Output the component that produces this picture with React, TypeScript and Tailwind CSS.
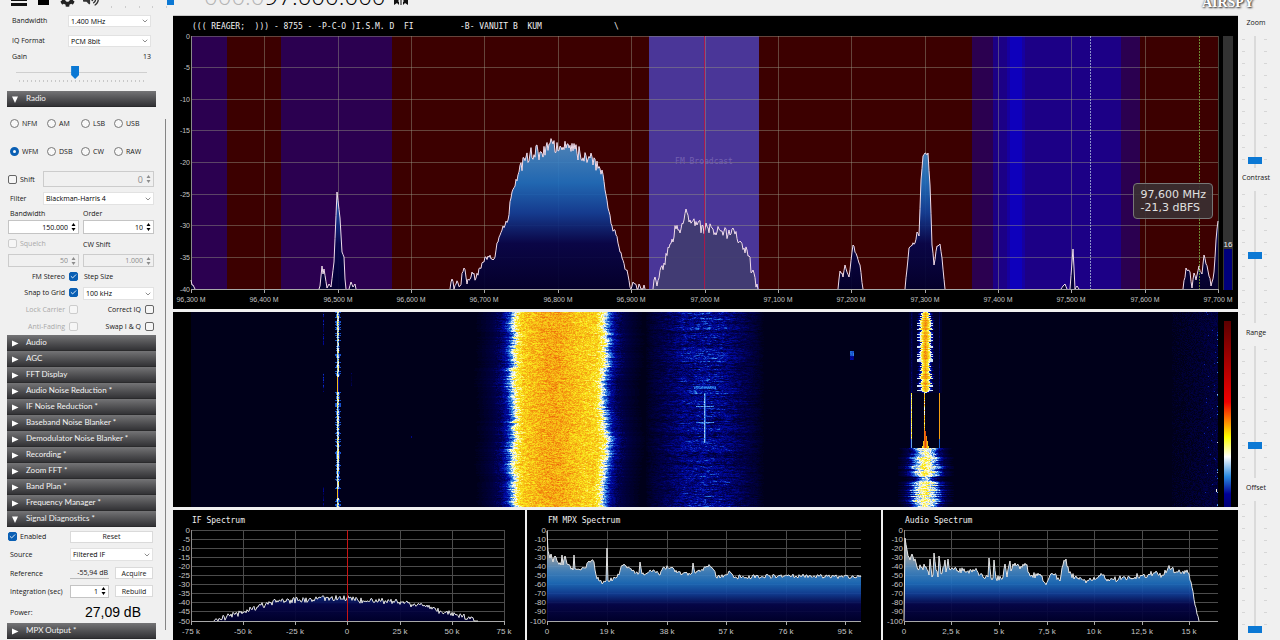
import { useId, useMemo } from "react"
import type { ReactNode } from "react"
import { Check, ChevronDown } from "lucide-react"
import { FaCog, FaVolumeUp } from "react-icons/fa"

type Point = [number, number]

// small seeded generator so the traces look the same on every render
function createRandom(seed: number) {
  let s = seed
  return () => {
    s = (s * 1664525 + 1013904223) % 4294967296
    return s / 4294967296
  }
}

function roughen(points: Point[], amp: number, seed: number, floor: number, top = 0): Point[] {
  const rnd = createRandom(seed)
  const out: Point[] = []
  for (let i = 0; i < points.length - 1; i++) {
    const [x0, y0] = points[i]
    const [x1, y1] = points[i + 1]
    out.push([x0, y0])
    for (let x = x0 + 1; x < x1; x++) {
      const y = y0 + ((y1 - y0) * (x - x0)) / (x1 - x0) + (rnd() - 0.5) * 2 * amp
      out.push([x, Math.max(top, Math.min(floor, Math.round(y * 10) / 10))])
    }
  }
  out.push(points[points.length - 1])
  return out
}

const toLine = (pts: Point[]) => "M" + pts.map((p) => p.join(" ")).join("L")

/* ---------- spectrum data ---------- */

const MAIN_SEGMENTS: { amp: number; selected?: boolean; points: Point[] }[] = [
  { amp: 0, points: [[191, 280], [192, 285], [193, 285], [195, 289]] },
  { amp: 0, points: [[319, 289], [320, 286], [322, 266], [323, 274], [324, 269], [327, 288], [329, 284], [331, 287], [334, 262], [337, 192], [340, 218], [342, 252], [344, 257], [345, 279], [346, 289]] },
  { amp: 0, points: [[349, 289], [351, 282], [353, 287], [355, 284], [356, 289]] },
  { amp: 4, points: [[450, 289], [452, 279], [454, 289], [458, 283], [460, 286], [464, 268], [467, 284], [472, 272], [476, 278], [480, 268], [484, 262], [488, 256], [494, 259], [498, 242], [503, 226], [508, 220], [511, 198], [515, 186], [519, 172]] },
  { amp: 8, points: [[519, 172], [524, 158], [530, 154], [540, 152], [553, 144], [558, 151], [562, 150], [569, 148], [580, 153], [590, 158], [602, 170]] },
  { amp: 4, points: [[602, 170], [606, 195], [608, 208], [612, 226], [616, 235], [622, 258], [627, 270], [631, 289], [633, 282], [637, 289], [640, 286], [642, 289], [644, 285], [645, 289]] },
  { amp: 6, selected: true, points: [[653, 289], [655, 277], [657, 286], [664, 263], [670, 244], [676, 229], [680, 233], [684, 220], [686, 209], [690, 220], [697, 225], [705, 229], [712, 228], [722, 231], [730, 235], [733, 228], [741, 242], [747, 250], [752, 272], [757, 284], [758, 289]] },
  { amp: 2, points: [[838, 289], [840, 271], [843, 277], [845, 265], [849, 277], [853, 245], [857, 256], [860, 265], [863, 289]] },
  { amp: 2, points: [[905, 289], [909, 248], [915, 243], [917, 232], [919, 236], [921, 180], [923, 156], [925, 153], [928, 153], [930, 185], [932, 245], [934, 265], [937, 246], [940, 244], [942, 258], [945, 289]] },
  { amp: 0, points: [[1061, 289], [1063, 286], [1065, 284], [1067, 289]] },
  { amp: 0, points: [[1070, 289], [1072, 262], [1073, 249], [1074, 268], [1075, 289], [1077, 286], [1079, 289]] },
  { amp: 3, points: [[1183, 289], [1186, 268], [1190, 272], [1192, 288], [1194, 273], [1196, 280], [1199, 266], [1202, 274], [1204, 255], [1208, 271], [1211, 286], [1214, 272], [1216, 240], [1218, 221]] },
]

const IF_POINTS: Point[] = [[214, 621], [220, 619], [230, 616], [243, 612], [257, 607], [270, 603], [285, 601], [300, 600], [315, 599], [330, 598], [347, 598], [365, 601], [380, 601], [395, 601], [410, 604], [425, 606], [440, 611], [455, 614], [470, 619], [478, 621]]

const MPX_POINTS: Point[] = [[547, 531], [548, 551], [550, 558], [551, 554], [553, 562], [555, 556], [557, 561], [561, 565], [562, 555], [563, 565], [565, 556], [567, 564], [573, 570], [574, 555], [575, 569], [584, 568], [591, 561], [594, 562], [596, 575], [599, 581], [603, 583], [606, 581], [607, 548], [608, 581], [615, 578], [619, 575], [621, 567], [624, 564], [632, 571], [639, 573], [640, 562], [642, 574], [653, 570], [660, 575], [664, 567], [670, 568], [682, 574], [692, 573], [693, 563], [695, 573], [710, 566], [714, 570], [716, 577], [725, 575], [729, 571], [735, 577], [800, 576], [861, 577]]

const AUDIO_POINTS: Point[] = [[904, 621], [905, 538], [907, 550], [910, 560], [912, 554], [917, 567], [925, 567], [929, 575], [930, 559], [932, 577], [933, 575], [934, 553], [936, 570], [938, 577], [939, 556], [941, 574], [945, 560], [946, 572], [948, 559], [950, 570], [956, 568], [965, 572], [975, 570], [983, 577], [988, 577], [989, 558], [991, 578], [993, 578], [994, 560], [996, 578], [1003, 577], [1005, 564], [1007, 577], [1010, 561], [1011, 571], [1015, 563], [1020, 569], [1026, 565], [1031, 576], [1040, 574], [1045, 583], [1053, 574], [1060, 581], [1063, 565], [1066, 559], [1069, 573], [1075, 577], [1088, 581], [1100, 576], [1110, 580], [1125, 577], [1142, 576], [1155, 573], [1162, 575], [1168, 568], [1180, 572], [1188, 573], [1191, 582], [1195, 605], [1197, 614], [1199, 621]]

/* ---------- charts ---------- */

interface ChartProps {
  view: string
  label: string
  left: number
  right: number
  top: number
  bottom: number
  xTicks: { x: number; text: string }[]
  yStep: number
  yCount: number
  gridColor: string
  labelSize: string
  background?: ReactNode
  children: ReactNode
}

function Chart({ view, label, left, right, top, bottom, xTicks, yStep, yCount, gridColor, labelSize, background, children }: ChartProps) {
  const rows = Array.from({ length: yCount + 1 }, (_, i) => i)
  return (
    <svg viewBox={view} role="img" aria-label={label} className="block w-full bg-black font-['Liberation_Sans',sans-serif]">
      {background}
      {rows.map((i) => {
        const y = Math.floor(top + ((bottom - top) * i) / yCount)
        return (
          <g key={i}>
            <line x1={left} x2={right} y1={y + 0.5} y2={y + 0.5} stroke={i === yCount ? "#a8a8a8" : gridColor} />
            <text x={left - 1} y={y + 3} textAnchor="end" fill="#c4c4c4" className={labelSize}>
              {i === 0 ? "0" : -i * yStep}
            </text>
          </g>
        )
      })}
      {xTicks.map((t, i) => (
        <g key={t.text}>
          <line x1={t.x + 0.5} x2={t.x + 0.5} y1={top} y2={bottom} stroke={i === 0 ? "#8a8a8a" : gridColor} />
          <line x1={t.x + 0.5} x2={t.x + 0.5} y1={bottom} y2={bottom + 4} stroke="#a8a8a8" />
          <text x={t.x} y={bottom + 13} textAnchor="middle" fill="#c4c4c4" className={labelSize}>
            {t.text}
          </text>
        </g>
      ))}
      {children}
    </svg>
  )
}

function LevelGradient({ id, top, bottom }: { id: string; top: number; bottom: number }) {
  return (
    <linearGradient id={id} gradientUnits="userSpaceOnUse" x1="0" x2="0" y1={top} y2={bottom}>
      <stop offset="0" stopColor="#d0d0d0" />
      <stop offset="0.3" stopColor="#98a6b2" />
      <stop offset="0.45" stopColor="#4788c4" />
      <stop offset="0.58" stopColor="#1f70c0" />
      <stop offset="0.7" stopColor="#12409a" />
      <stop offset="0.82" stopColor="#06064c" />
      <stop offset="1" stopColor="#00002e" />
    </linearGradient>
  )
}

function ChartTitle({ x, y, children }: { x: number; y: number; children: ReactNode }) {
  return (
    <text x={x} y={y} fill="#f0f0f0" xmlSpace="preserve" className="font-['DejaVu_Sans_Mono',monospace] text-[8px]">
      {children}
    </text>
  )
}

const MAIN_TICKS = Array.from({ length: 15 }, (_, i) => {
  const khz = 96300 + i * 100
  return { x: Math.round(191 + i * 73.36), text: `${Math.floor(khz / 1000)},${String(khz % 1000).padStart(3, "0")} M` }
})

function MainSpectrum() {
  const id = useId()
  const segments = useMemo(
    () => MAIN_SEGMENTS.map((s, i) => ({ ...s, path: toLine(roughen(s.points, s.amp, 40 + i, 289)) })),
    []
  )
  return (
    <Chart
      view="173 16 1065 293"
      label="RF spectrum"
      left={191}
      right={1218}
      top={36}
      bottom={289}
      xTicks={MAIN_TICKS}
      yStep={5}
      yCount={8}
      gridColor="rgba(150,150,130,0.45)"
      labelSize="text-[7px]"
      background={
        <g>
          <rect x="191" y="36" width="1027" height="253" fill="#3c0000" />
          <rect x="191" y="36" width="36" height="253" fill="#2b0050" />
          <rect x="281" y="36" width="111" height="253" fill="#2b0050" />
          <rect x="649" y="36" width="110" height="253" fill="#4a3698" />
          <rect x="972" y="36" width="168" height="253" fill="#2b0050" />
          <rect x="993" y="36" width="128" height="253" fill="#1c0086" />
          <rect x="1007" y="36" width="18" height="253" fill="#1600a0" />
          <rect x="1010" y="36" width="12" height="253" fill="#0e00bc" />
        </g>
      }
    >
      <defs>
        <LevelGradient id={id} top={36} bottom={289} />
      </defs>
      <ChartTitle x={192} y={29}>{"((( REAGER;  ))) - 8755 - -P-C-O )I.S.M. D  FI"}</ChartTitle>
      <ChartTitle x={460} y={29}>{"-B- VANUIT B  KUM"}</ChartTitle>
      <ChartTitle x={614} y={29}>{"\\"}</ChartTitle>
      {segments.map((s, i) => (
        <g key={i}>
          <path
            d={`${s.path}L${s.points[s.points.length - 1][0]} 289L${s.points[0][0]} 289Z`}
            fill={s.selected ? "#403c70" : `url(#${id})`}
            fillOpacity={0.92}
          />
          <path d={s.path} fill="none" stroke="#f0dcea" strokeWidth="1" />
        </g>
      ))}
      <text x="704" y="164" textAnchor="middle" fill="#7360b0" className="font-['DejaVu_Sans_Mono',monospace] text-[8px]">
        FM Broadcast
      </text>
      <line x1="704.5" x2="704.5" y1="36" y2="289" stroke="#b81444" strokeOpacity="0.85" />
      <line x1="1090.5" x2="1090.5" y1="36" y2="289" stroke="#a8b8d8" strokeDasharray="2 1" strokeOpacity="0.8" />
      <line x1="1199.5" x2="1199.5" y1="36" y2="289" stroke="#6c8c34" strokeDasharray="2 1" />
      <rect x="1223" y="36" width="10" height="254" fill="#333333" />
      <rect x="1224" y="249" width="8" height="41" fill="#00007c" />
      <text x="1228" y="247" textAnchor="middle" fill="#eeeeee" className="text-[8px]">
        16
      </text>
    </Chart>
  )
}

/* ---------- waterfall ---------- */

const PALETTE: [number, number, number, number][] = [
  [0, 0, 0, 26],
  [0.15, 0, 0, 80],
  [0.3, 0, 10, 165],
  [0.42, 40, 125, 225],
  [0.52, 250, 252, 250],
  [0.62, 250, 235, 30],
  [0.78, 242, 140, 15],
  [0.9, 225, 30, 10],
  [1, 110, 0, 0],
]
const LEVELS = 40

function paletteColor(v: number) {
  for (let i = 1; i < PALETTE.length; i++) {
    const [b, ...hi] = PALETTE[i]
    if (v <= b) {
      const [a, ...lo] = PALETTE[i - 1]
      const t = (v - a) / (b - a)
      return `rgb(${lo.map((c, k) => Math.round(c + (hi[k] - c) * t)).join(",")})`
    }
  }
  return "rgb(110,0,0)"
}

function lerpStops(v: number, stops: Point[]) {
  if (v <= stops[0][0]) return stops[0][1]
  for (let i = 1; i < stops.length; i++) {
    if (v <= stops[i][0]) {
      const [a, x] = stops[i - 1]
      const [b, y] = stops[i]
      return x + ((y - x) * (v - a)) / (b - a)
    }
  }
  return stops[stops.length - 1][1]
}

// level against distance inside the edge of a strong station
const WIDE_EDGE: Point[] = [[-38, 0], [-24, 0.08], [-14, 0.16], [-7, 0.3], [-3, 0.42], [0, 0.51], [4, 0.6], [10, 0.66]]

function buildWaterfall() {
  const rnd = createRandom(977)
  const paths: string[][] = Array.from({ length: LEVELS + 1 }, () => [])
  const x0 = 191
  const x1 = 1218
  let drift = 0
  let fmRow = 0
  for (let row = 0; row < 195; row++) {
    const line = new Float32Array(x1 - x0)
    const put = (x: number, v: number) => {
      if (x >= x0 && x < x1) line[x - x0] = Math.max(line[x - x0], v)
    }
    drift = drift * 0.85 + (rnd() - 0.5) * 1.8
    fmRow = fmRow * 0.6 + (rnd() - 0.5) * 0.09

    const le = 513 + drift + Math.sin(row / 13) * 1.5 + (rnd() - 0.5) * 4
    const re = 604 + drift + Math.sin(row / 17) * 2 + (rnd() - 0.5) * 4
    let n = 0
    for (let x = 470; x < 645; x++) {
      n = n * 0.35 + (rnd() - 0.5) * 0.13
      const d = Math.min(x - le, re - x)
      const core = 0.075 * Math.exp(-(((x - 553) / 24) ** 2))
      put(x, lerpStops(d, WIDE_EDGE) + (d > 3 ? core + n : d > -18 ? n * 0.8 : 0))
    }

    // weak FM station with horizontal streaks
    n = 0
    for (let x = 646; x < 764; x++) {
      n = n * 0.6 + (rnd() - 0.5) * 0.2
      const dist = Math.abs(x - 704)
      const shape = lerpStops(dist, [[0, 1], [22, 0.85], [40, 0.5], [52, 0.25], [60, 0]])
      put(x, shape * (0.25 + fmRow) + n * (0.1 + shape * 0.75))
    }
    if (row > 73 && row < 77) for (let x = 694; x < 716; x++) put(x, 0.34 + rnd() * 0.1)
    if (row > 80 && row < 131) {
      put(704, 0.43 + rnd() * 0.06)
      put(705, 0.38)
    }
    if (row === 94 || row === 110) for (let x = 696; x < 714; x++) put(x, 0.4 + rnd() * 0.06)

    // narrow carrier
    const c = rnd()
    const quiet = (row > 64 && row < 80) || (row > 176 && row < 186)
    put(337, quiet ? 0.7 : 0.47 + c * 0.12)
    put(338, quiet ? 0.28 : 0.4 + rnd() * 0.2)
    if (!quiet && c > 0.4) {
      put(336, 0.4)
      put(339, 0.34)
    }
    if (!quiet && c > 0.8) {
      put(335, 0.38)
      put(340, 0.38)
    }
    if (row < 34 || (row > 60 && row < 80) || row > 174) put(323, rnd() * 0.36)
    if (row > 60 && row < 74) put(351, rnd() * 0.2)

    // 97,300 MHz station, three phases
    if (row < 81) {
      const w = 5 + (rnd() - 0.5) * 3 - (row < 8 ? 1 : 0) - (row > 76 ? row - 76 : 0)
      for (let x = 909; x < 942; x++) {
        const d = w - Math.abs(x - 925)
        put(x, d > 0 ? lerpStops(d, [[0, 0.5], [2, 0.62], [5, 0.77]]) + (rnd() - 0.5) * 0.08 : d > -3 ? 0.36 + d * 0.08 : 0.04)
      }
      if (rnd() > 0.78) for (let x = 917; x < 933; x++) put(x, 0.5)
      put(911, 0.1 + rnd() * 0.1)
      put(912, 0.1)
      put(939, 0.12 + rnd() * 0.08)
    } else if (row < 136) {
      const cone = row > 118 ? (row - 118) / 5 : 0
      for (let x = 920; x < 930; x++) if (Math.abs(x - 925) < cone) put(x, 0.86 - Math.abs(x - 925) * 0.08)
      put(924, cone ? 0.8 : 0.5 + rnd() * 0.3)
      put(911, row > 126 ? 0.45 : 0.54 + rnd() * 0.14)
      put(910, 0.2)
      put(939, row > 126 ? 0.4 : 0.76)
    } else {
      const w = 14 + (rnd() - 0.5) * 7 - (Math.abs(row - 166) < 3 ? 6 : 0)
      n = 0
      for (let x = 898; x < 954; x++) {
        n = n * 0.4 + (rnd() - 0.5) * 0.12
        const d = w - Math.abs(x - 925)
        put(x, lerpStops(d, [[-14, 0], [-5, 0.14], [0, 0.32], [3, 0.45], [8, 0.52], [14, 0.59]]) + (d > -6 ? n : 0))
      }
    }

    if (row > 38 && row < 48) {
      for (let x = 850; x < 854; x++) put(x, (row < 44 ? 0.44 : 0.3) - rnd() * 0.08)
    }
    if (row === 124 || row === 125) put(411, 0.25)

    for (let x = 1172; x < 1218; x++) put(x, ((x - 1172) / 46) * 0.1 + (rnd() - 0.5) * 0.12)
    if (rnd() > 0.88) put(1217, 0.3 + rnd() * 0.2)
    if (rnd() > 0.85) put(1204 + Math.floor(rnd() * 12), 0.32)
    if (row > 176 && row < 180) put(1216, 0.52)

    let start = 0
    let level = Math.round(line[0] * LEVELS)
    for (let i = 1; i <= line.length; i++) {
      const next = i < line.length ? Math.min(LEVELS, Math.round(line[i] * LEVELS)) : -1
      if (next !== level) {
        if (level > 0) paths[level].push(`M${x0 + start} ${312 + row}.5h${i - start}`)
        start = i
        level = next
      }
    }
  }
  return paths
}

function Waterfall() {
  const id = useId()
  const paths = useMemo(buildWaterfall, [])
  return (
    <svg viewBox="173 312 1065 195" role="img" aria-label="Waterfall" className="block w-full bg-black">
      <defs>
        <linearGradient id={id} x1="0" x2="0" y1="0" y2="1">
          <stop offset="0" stopColor="#5c0000" />
          <stop offset="0.37" stopColor="#f00000" />
          <stop offset="0.45" stopColor="#ff7a00" />
          <stop offset="0.53" stopColor="#ffff00" />
          <stop offset="0.62" stopColor="#ffffff" />
          <stop offset="0.71" stopColor="#2a8ae0" />
          <stop offset="0.79" stopColor="#000096" />
          <stop offset="1" stopColor="#00001c" />
        </linearGradient>
      </defs>
      <rect x="191" y="312" width="1027" height="195" fill="#00001a" />
      <g shapeRendering="crispEdges">
        {paths.map((p, i) => (p.length ? <path key={i} d={p.join("")} stroke={paletteColor(i / LEVELS)} /> : null))}
      </g>
      <rect x="1224" y="321" width="7" height="219" fill={`url(#${id})`} />
    </svg>
  )
}

interface SmallSpectrumProps {
  view: string
  title: string
  left: number
  right: number
  ticks: { x: number; text: string }[]
  yStep: number
  points: Point[]
  amp: number
  centre?: number
}

function SmallSpectrum({ view, title, left, right, ticks, yStep, points, amp, centre }: SmallSpectrumProps) {
  const id = useId()
  const path = useMemo(() => toLine(roughen(points, amp, 7 + left, 621, 530)), [points, amp, left])
  return (
    <Chart
      view={view}
      label={title}
      left={left}
      right={right}
      top={530}
      bottom={621}
      xTicks={ticks}
      yStep={yStep}
      yCount={10}
      gridColor="#4c4c4c"
      labelSize="text-[8px]"
    >
      <defs>
        <LevelGradient id={id} top={530} bottom={621} />
      </defs>
      <ChartTitle x={left + 1} y={523}>{title}</ChartTitle>
      <path d={`${path}L${points[points.length - 1][0]} 621L${points[0][0]} 621Z`} fill={`url(#${id})`} fillOpacity={0.92} />
      <path d={path} fill="none" stroke="#e4e4e4" strokeWidth="1" />
      {centre && <line x1={centre} x2={centre} y1="530" y2="621" stroke="#c81414" />}
    </Chart>
  )
}

const IF_TICKS = [
  { x: 191, text: "-75 k" },
  { x: 243, text: "-50 k" },
  { x: 295, text: "-25 k" },
  { x: 347, text: "0" },
  { x: 400, text: "25 k" },
  { x: 452, text: "50 k" },
  { x: 504, text: "75 k" },
]
const MPX_TICKS = [
  { x: 547, text: "0" },
  { x: 607, text: "19 k" },
  { x: 667, text: "38 k" },
  { x: 726, text: "57 k" },
  { x: 786, text: "76 k" },
  { x: 845, text: "95 k" },
]
const AUDIO_TICKS = [
  { x: 904, text: "0" },
  { x: 951, text: "2,5 k" },
  { x: 999, text: "5 k" },
  { x: 1047, text: "7,5 k" },
  { x: 1094, text: "10 k" },
  { x: 1142, text: "12,5 k" },
  { x: 1189, text: "15 k" },
]

/* ---------- form controls ---------- */

function SelectBox({ label, value, className }: { label: string; value: string; className: string }) {
  return (
    <div className={`relative ${className}`}>
      <select aria-label={label} className="block h-full w-full appearance-none border border-[#e2e2e2] bg-white pl-[2px] text-[7px] leading-none text-black">
        <option>{value}</option>
      </select>
      <ChevronDown className="pointer-events-none absolute top-1/2 right-[2px] size-2 -translate-y-1/2 text-[#555]" />
    </div>
  )
}

function NumberBox({ label, value, disabled, big }: { label: string; value: string; disabled?: boolean; big?: boolean }) {
  return (
    <div className={`flex h-full w-full items-center border pr-[2px] ${disabled ? "border-[#cccccc] text-[#8c8c8c]" : "border-[#c4c4c4] bg-white text-black"}`}>
      <input
        aria-label={label}
        defaultValue={value}
        disabled={disabled}
        className={`w-full min-w-0 bg-transparent pr-[3px] text-right leading-none ${big ? "text-[9px]" : "text-[7px]"}`}
      />
      <svg viewBox="0 0 5 10" className="h-[10px] w-[5px] shrink-0" aria-hidden="true">
        <path d="M2.5 1L4.5 4H.5ZM2.5 9L4.5 6H.5Z" fill="currentColor" />
      </svg>
    </div>
  )
}

interface CheckProps {
  label: string
  checked?: boolean
  disabled?: boolean
  boxLast?: boolean
}

function CheckField({ label, checked, disabled, boxLast }: CheckProps) {
  return (
    <label className={`flex items-center ${boxLast ? "flex-row-reverse gap-1" : "gap-[3px]"} ${disabled ? "text-[#a8a8a8]" : ""}`}>
      <span className="relative block size-[9px]">
        <input
          type="checkbox"
          defaultChecked={checked}
          disabled={disabled}
          className="block size-[9px] appearance-none rounded-[2px] border border-[#666] bg-[#f6f6f6] checked:border-[#0a5fb4] checked:bg-[#0a5fb4] disabled:border-[#cccccc]"
        />
        {checked && <Check strokeWidth={3} className="pointer-events-none absolute inset-px size-[7px] text-white" />}
      </span>
      {label}
    </label>
  )
}

function PanelHeader({ title, open }: { title: string; open?: boolean }) {
  return (
    <button
      type="button"
      aria-expanded={!!open}
      className="flex h-4 w-full items-center border-b border-[#2a2a2c] bg-linear-to-b from-[#747476] to-[#333336] pl-[5px] text-left font-['Lato',sans-serif] text-[8px] leading-[10px] text-[#f4f4f4]"
    >
      <svg viewBox="0 0 7 7" className="mt-[2px] mr-[7px] size-[7px]" aria-hidden="true">
        <path d={open ? "M0 .5H6L3 7Z" : "M0 .5V6.5L6.5 3.5Z"} fill="#fff" />
      </svg>
      <span className="pb-[2px]">{title}</span>
    </button>
  )
}

const MODES = ["NFM", "AM", "LSB", "USB", "WFM", "DSB", "CW", "RAW"]

const CLOSED_PANELS = [
  "Audio",
  "AGC",
  "FFT Display",
  "Audio Noise Reduction *",
  "IF Noise Reduction *",
  "Baseband Noise Blanker *",
  "Demodulator Noise Blanker *",
  "Recording *",
  "Zoom FFT *",
  "Band Plan *",
  "Frequency Manager *",
]

function Sidebar() {
  return (
    <aside className="flex w-[173px] shrink-0 text-[7px] leading-none text-[#151515]">
      <div className="ml-[7px] w-[149px]">
        <div className="flex flex-col gap-2 pr-[5px] pl-[5px]">
          <div className="flex h-3 items-center justify-between">
            <span className="pb-px">Bandwidth</span>
            <SelectBox label="Bandwidth" value="1.400 MHz" className="h-3 w-[83px]" />
          </div>
          <div className="flex h-3 items-center justify-between">
            <span className="pb-px">IQ Format</span>
            <SelectBox label="IQ Format" value="PCM 8bit" className="h-3 w-[83px]" />
          </div>
        </div>
        <div className="mt-[3px] px-[5px]">
          <label htmlFor="gain" className="flex h-3 items-center justify-between">
            Gain <span>13</span>
          </label>
          <input
            id="gain"
            type="range"
            min="0"
            max="29"
            defaultValue="13"
            className="mt-1 ml-1 block h-[13px] w-[131px] appearance-none bg-transparent [&::-webkit-slider-runnable-track]:h-px [&::-webkit-slider-runnable-track]:bg-[#cfcfcf] [&::-webkit-slider-thumb]:-mt-[6px] [&::-webkit-slider-thumb]:h-[13px] [&::-webkit-slider-thumb]:w-2 [&::-webkit-slider-thumb]:appearance-none [&::-webkit-slider-thumb]:bg-[#0b78d4] [&::-webkit-slider-thumb]:[clip-path:polygon(0_0,100%_0,100%_70%,50%_100%,0_70%)]"
          />
          <div className="mt-px ml-[7px] h-[2px] w-[126px] bg-[repeating-linear-gradient(to_right,#c8c8c8_0_1px,transparent_1px_4px)]" />
        </div>

        <div className="mt-[9px]">
          <PanelHeader title="Radio" open />
        </div>
        <fieldset className="mt-[10px] grid grid-cols-[37px_34px_33px_auto] gap-y-4 pl-[3px]">
          {MODES.map((m) => (
            <label key={m} className="flex h-3 items-center gap-[3px]">
              <input
                type="radio"
                name="mode"
                defaultChecked={m === "WFM"}
                className="block size-[9px] appearance-none rounded-full border border-[#777] bg-[#f8f8f8] checked:border-[3px] checked:border-[#0a5fb4]"
              />
              {m}
            </label>
          ))}
        </fieldset>

        <div className="mt-[14px] flex h-4 items-center justify-between pr-[2px] pl-px">
          <CheckField label="Shift" />
          <div className="h-4 w-[111px]">
            <NumberBox label="Shift" value="0" disabled big />
          </div>
        </div>
        <div className="mt-[5px] flex h-[13px] items-center justify-between pr-[2px] pl-[3px]">
          Filter
          <SelectBox label="Filter" value="Blackman-Harris 4" className="h-[13px] w-[111px]" />
        </div>

        <div className="mt-[3px] grid grid-cols-2 items-center gap-x-1 pr-[2px] pl-px">
          <span className="h-[10px] pt-[2px] pl-[2px]">Bandwidth</span>
          <span className="h-[10px] pt-[2px]">Order</span>
          <div className="mt-[2px] h-[14px]">
            <NumberBox label="Filter bandwidth" value="150.000" />
          </div>
          <div className="mt-[2px] h-[14px]">
            <NumberBox label="Filter order" value="10" />
          </div>
          <div className="flex h-5 items-center pb-px">
            <CheckField label="Squelch" disabled />
          </div>
          <span>CW Shift</span>
          <div className="h-[13px]">
            <NumberBox label="Squelch" value="50" disabled />
          </div>
          <div className="h-[13px]">
            <NumberBox label="CW shift" value="1.000" disabled />
          </div>
        </div>

        <div className="mt-px mb-px grid grid-cols-2 gap-x-1 pr-[2px] pl-px">
          <div className="flex h-4 items-center justify-end pr-px">
            <CheckField label="FM Stereo" checked boxLast />
          </div>
          <span className="flex h-4 items-center pl-px">Step Size</span>
          <div className="flex h-[17px] items-center justify-end pr-px">
            <CheckField label="Snap to Grid" checked boxLast />
          </div>
          <SelectBox label="Step Size" value="100 kHz" className="mt-[3px] h-[13px]" />
          <div className="flex h-[17px] items-center justify-end pr-px">
            <CheckField label="Lock Carrier" disabled boxLast />
          </div>
          <div className="flex h-[17px] items-center justify-end">
            <CheckField label="Correct IQ" boxLast />
          </div>
          <div className="flex h-4 items-center justify-end pr-px">
            <CheckField label="Anti-Fading" disabled boxLast />
          </div>
          <div className="flex h-4 items-center justify-end">
            <CheckField label="Swap I & Q" boxLast />
          </div>
        </div>

        <div>
          {CLOSED_PANELS.map((title) => (
            <PanelHeader key={title} title={title} />
          ))}
          <PanelHeader title="Signal Diagnostics *" open />
        </div>

        <div className="flex flex-col pt-[3px] pr-[3px] pl-px">
          <div className="flex h-[13px] items-center justify-between">
            <CheckField label="Enabled" checked />
            <button type="button" className="h-3 w-[83px] border border-[#dadada] bg-white">
              Reset
            </button>
          </div>
          <div className="mt-[5px] flex h-[13px] items-center justify-between pl-[2px]">
            Source
            <SelectBox label="Source" value="Filtered IF" className="h-[13px] w-[83px]" />
          </div>
          <div className="mt-[6px] flex h-3 items-center pl-[2px]">
            <span className="flex-1">Reference</span>
            <output className="mr-[6px] flex h-3 w-[39px] items-center justify-end border-b border-[#bcbcbc] pr-px">-55,94 dB</output>
            <button type="button" className="h-3 w-[38px] border border-[#dadada] bg-white">
              Acquire
            </button>
          </div>
          <div className="mt-[6px] flex h-3 items-center pl-[2px]">
            <span className="flex-1">Integration (sec)</span>
            <div className="mr-[6px] h-[13px] w-[39px]">
              <NumberBox label="Integration (sec)" value="1" />
            </div>
            <button type="button" className="h-3 w-[38px] border border-[#dadada] bg-white">
              Rebuild
            </button>
          </div>
          <div className="mt-[6px] flex h-[18px] items-center justify-between pr-3 pl-[2px]">
            Power:
            <span className="font-['Liberation_Sans',sans-serif] text-[14px] text-black">27,09 dB</span>
          </div>
        </div>
        <div className="mt-[2px]">
          <PanelHeader title="MPX Output *" />
        </div>
      </div>
      <div className="mt-[104px] ml-[9px] h-[511px] w-px bg-[#858585]" />
    </aside>
  )
}

/* ---------- right hand sliders ---------- */

const SLIDERS = [
  { name: "Zoom", value: 3 },
  { name: "Contrast", value: 51 },
  { name: "Range", value: 23 },
  { name: "Offset", value: 0 },
]

function SliderColumn() {
  return (
    <aside className="w-[42px] shrink-0 text-[7px] leading-none text-[#151515]">
      {SLIDERS.map((s) => (
        <div key={s.name} className="flex h-[155px] flex-col items-center pr-[6px]">
          <label htmlFor={s.name} className="flex h-[14px] items-center">
            {s.name}
          </label>
          <div className="mt-[7px] flex h-[132px] justify-center pr-1">
            <div className="mr-[3px] h-full w-[3px] bg-[repeating-linear-gradient(to_bottom,transparent_0_3px,#d6d6d6_3px_4px,transparent_4px_12px)]" />
            <input
              id={s.name}
              type="range"
              defaultValue={s.value}
              className="h-full w-[14px] appearance-none bg-[linear-gradient(to_right,transparent_6px,#dadada_6px_8px,transparent_8px)] [direction:rtl] [writing-mode:vertical-lr] [&::-webkit-slider-thumb]:h-[7px] [&::-webkit-slider-thumb]:w-[14px] [&::-webkit-slider-thumb]:appearance-none [&::-webkit-slider-thumb]:bg-[#0b78d4]"
            />
            <div className="ml-[2px] h-full w-[3px] bg-[repeating-linear-gradient(to_bottom,transparent_0_3px,#d6d6d6_3px_4px,transparent_4px_12px)]" />
          </div>
        </div>
      ))}
    </aside>
  )
}

function Toolbar() {
  return (
    <header className="flex h-[15px] items-end overflow-hidden pb-[9px]">
      <button type="button" aria-label="Menu" className="ml-[11px] flex w-4 flex-col gap-[2px]">
        <span className="h-[3px] bg-[#111]" />
        <span className="h-[3px] bg-[#111]" />
      </button>
      <button type="button" aria-label="Stop" className="mb-px ml-[11px] size-[11px] bg-black" />
      <button type="button" aria-label="Settings" className="-mb-px ml-[11px]">
        <FaCog className="size-[15px] text-[#222]" />
      </button>
      <button type="button" aria-label="Volume" className="-mb-px ml-2">
        <FaVolumeUp className="size-4 text-[#333]" />
      </button>
      <div className="ml-3 flex w-14 justify-between" aria-hidden="true">
        {Array.from({ length: 5 }, (_, i) => (
          <span key={i} className="-mb-[2px] h-[2px] w-px bg-[#cccccc]" />
        ))}
      </div>
      <span className="mb-px h-2 w-[7px] bg-[#0b78d4]" />
      <div className="-mb-[2px] ml-[30px] font-['Open_Sans',sans-serif] text-[24px] leading-[24px] font-light whitespace-nowrap text-black">
        <span className="text-[#b4b4b4]">000.0</span>97.000.000
      </div>
      <svg viewBox="0 0 14 12" className="mb-px ml-2 h-3 w-[14px] shrink-0" aria-hidden="true">
        <path d="M0 12V4L5 9V12L3 10ZM14 12V4L9 9V12L11 10ZM6.500 0H7.500V12H6.500ZM0 4L7 0L14 4L10 8L7 5L4 8Z" fill="#111" />
      </svg>
      <div className="mr-[26px] -mb-[3px] ml-auto font-['Liberation_Serif',serif] text-[14px] leading-[13px] font-bold text-white [text-shadow:1px_1px_2px_#333,0_0_2px_#555]">
        AIRSPY
      </div>
    </header>
  )
}

export default function App() {
  return (
    <div className="min-h-screen overflow-hidden bg-[#f0f0f0] font-['Open_Sans',sans-serif]">
      <Toolbar />
      <div className="flex">
        <Sidebar />
        <main className="flex min-w-0 flex-1 flex-col gap-[3px] border-t border-[#c8c8c8]">
          <div className="relative">
            <MainSpectrum />
            <div
              role="tooltip"
              className="absolute top-[167px] right-[25px] rounded border border-[#777] bg-[#3a3032]/90 px-[6px] py-1 font-['DejaVu_Sans',sans-serif] text-[11px] leading-[13px] whitespace-nowrap text-[#e0e0e0]"
            >
              97,600 MHz
              <br />
              -21,3 dBFS
            </div>
          </div>
          <Waterfall />
          <div className="grid grid-cols-[352fr_354fr_355fr] items-start gap-[2px]">
            <SmallSpectrum view="173 510 352 130" title="IF Spectrum" left={191} right={505} ticks={IF_TICKS} yStep={5} points={IF_POINTS} amp={3} centre={347.5} />
            <SmallSpectrum view="527 510 354 130" title="FM MPX Spectrum" left={547} right={861} ticks={MPX_TICKS} yStep={10} points={MPX_POINTS} amp={2} />
            <SmallSpectrum view="883 510 355 130" title="Audio Spectrum" left={904} right={1218} ticks={AUDIO_TICKS} yStep={10} points={AUDIO_POINTS} amp={3} />
          </div>
        </main>
        <SliderColumn />
      </div>
    </div>
  )
}
